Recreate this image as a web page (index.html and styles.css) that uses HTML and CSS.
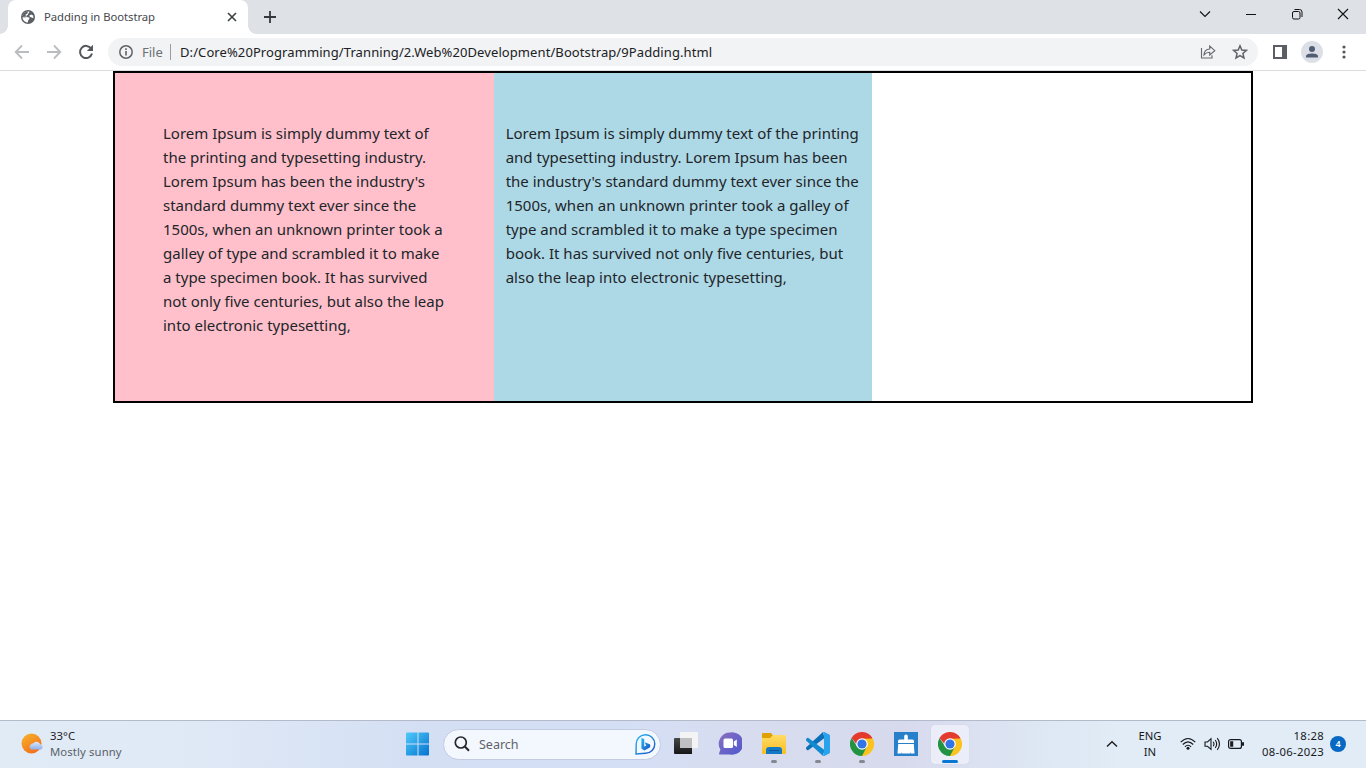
FILE: index.html
```html
<!DOCTYPE html>
<html lang="en">
<head>
<meta charset="utf-8">
<title>Padding in Bootstrap</title>
<link rel="stylesheet" href="styles.css">
</head>
<body>
<svg class="defs" width="0" height="0">
  <defs>
    <linearGradient id="win" x1="0" y1="0" x2="1" y2="1"><stop offset="0" stop-color="#4fcbfa"/><stop offset="1" stop-color="#0572cf"/></linearGradient>
    <linearGradient id="sun" x1="0" y1="0" x2="0.6" y2="1"><stop offset="0" stop-color="#f6b62c"/><stop offset="1" stop-color="#f4701b"/></linearGradient>
    <linearGradient id="cloud" x1="0" y1="0" x2="0" y2="1"><stop offset="0" stop-color="#d9e6fb"/><stop offset="1" stop-color="#8fb0ea"/></linearGradient>
    <linearGradient id="bing" x1="0" y1="0" x2="1" y2="1"><stop offset="0" stop-color="#25b9ec"/><stop offset="1" stop-color="#1a50c8"/></linearGradient>
    <linearGradient id="chat" x1="0" y1="0" x2="1" y2="1"><stop offset="0" stop-color="#8b6fbf"/><stop offset="1" stop-color="#4c58cf"/></linearGradient>
    <linearGradient id="folder" x1="0" y1="0" x2="0" y2="1"><stop offset="0" stop-color="#ffdc66"/><stop offset="1" stop-color="#f8bd21"/></linearGradient>
    <linearGradient id="dark" x1="0" y1="0" x2="0" y2="1"><stop offset="0" stop-color="#474747"/><stop offset="1" stop-color="#161616"/></linearGradient>
    <symbol id="chrome" viewBox="0 0 24 24">
      <path fill="#e33b2e" d="M1.6 6A12 12 0 0 1 22.4 6L12 12Z"/>
      <path fill="#fcc31e" d="M22.4 6A12 12 0 0 1 12 24L12 12 12 6.5Z"/>
      <path fill="#229342" d="M1.6 6A12 12 0 0 0 12 24L16.8 14.8 12 12 7.2 14.8Z"/>
      <path fill="#e33b2e" d="M1.6 6L6.5 12 12 12 12 6.5 22.4 6.5 20 4 5 2.6Z"/>
      <circle cx="12" cy="12" r="5.8" fill="#fff"/><circle cx="12" cy="12" r="4.6" fill="#3174e8"/>
    </symbol>
  </defs>
</svg>
<header class="tabstrip">
  <div class="tab">
    <svg class="globe" width="14" height="14" viewBox="0 0 14 14"><circle cx="7" cy="7" r="7" fill="#5b5f64"/><path fill="#fff" d="M8.2 1.5C8.8 3 7 3 7 4.2S5 5.2 5.2 6.6 8 6.3 8.4 7.8 7 9.5 6.8 12.5C4 12.4 1.7 10.2 1.5 7.2L4.5 7.6 5 6.6 1.6 6C2.1 3.3 4.3 1.3 8.2 1.5ZM10 4.4 12.2 5.5 12.4 8C11 8.4 10.7 7.2 9.2 7.1L8.2 5.7Z"/><path fill="#5b5f64" d="M2 4.5Q3.5 1.8 7 1.3L6.4 3.4 4.6 4.6 4.9 6.4 2 6Z"/></svg>
    <span class="tab-title">Padding in Bootstrap</span>
    <svg width="10" height="10" viewBox="0 0 10 10"><path d="M1 1 9 9M9 1 1 9" stroke="#3c4043" stroke-width="1.6"/></svg>
  </div>
  <svg class="new-tab" width="12" height="12" viewBox="0 0 12 12"><path d="M6 0V12M0 6H12" stroke="#35393d" stroke-width="1.8"/></svg>
  <div class="window-controls">
    <svg width="46" height="28" viewBox="0 0 46 28"><path d="M18 11.5 23 16.5 28 11.5" fill="none" stroke="#111" stroke-width="1.1"/></svg>
    <svg width="46" height="28" viewBox="0 0 46 28"><path d="M18 14.5H28" stroke="#111"/></svg>
    <svg width="46" height="28" viewBox="0 0 46 28"><g fill="none" stroke="#111"><rect x="18.5" y="11.5" width="7.5" height="7.5" rx="1.5"/><path d="M20.5 9.5H25.5Q28 9.5 28 12V17"/></g></svg>
    <svg width="46" height="28" viewBox="0 0 46 28"><path d="M18 9 28 19M28 9 18 19" stroke="#111" stroke-width="1.1"/></svg>
  </div>
</header>
<nav class="toolbar">
  <svg class="back" width="16" height="16" viewBox="0 0 16 16"><path d="M15 8H2M8 1.5 1.7 8 8 14.5" fill="none" stroke="#babcbe" stroke-width="1.8"/></svg>
  <svg class="forward" width="16" height="16" viewBox="0 0 16 16"><path d="M1 8H14M8 1.5 14.3 8 8 14.5" fill="none" stroke="#babcbe" stroke-width="1.8"/></svg>
  <svg class="reload" width="16" height="16" viewBox="0 0 16 16"><path d="M13.2 4.6A6.1 6.1 0 1 0 14 9.6" fill="none" stroke="#54585d" stroke-width="2"/><path d="M15 .8V7H8.8Z" fill="#54585d"/></svg>
  <div class="address">
    <svg width="14" height="14" viewBox="0 0 14 14"><circle cx="7" cy="7" r="6.2" fill="none" stroke="#5f6368" stroke-width="1.5"/><path d="M7 6V10.5M7 3.3V4.9" stroke="#5f6368" stroke-width="1.6"/></svg>
    <span class="scheme">File</span>
    <span class="divider"></span>
    <span class="url">D:/Core%20Programming/Tranning/2.Web%20Development/Bootstrap/9Padding.html</span>
    <svg class="share" width="16" height="16" viewBox="0 0 16 16"><path d="M1.5 4V14H12V11.2M4 10.8C4.2 7.5 6 5.3 9.7 5V2L14.8 6.7 9.7 11V8.2C7 8.2 5.4 9 4 10.8Z" fill="none" stroke="#686c70" stroke-width="1.15"/></svg>
    <svg class="star" width="16" height="16" viewBox="0 0 16 16"><path d="M8 1.8 9.8 6 14.4 6.4 10.9 9.4 12 13.9 8 11.5 4 13.9 5.1 9.4 1.6 6.4 6.2 6Z" fill="none" stroke="#5f6368" stroke-width="1.5"/></svg>
  </div>
  <svg class="panel" width="14" height="14" viewBox="0 0 14 14"><path fill="#5b5f64" fill-rule="evenodd" d="M0 0H14V14H0ZM2 2V12H9V2Z"/></svg>
  <svg class="profile" width="22" height="22" viewBox="0 0 22 22"><circle cx="11" cy="11" r="11" fill="#dce0e6"/><circle cx="11" cy="8" r="3" fill="#505d73"/><path fill="#505d73" d="M5 16.5V15C5 11.5 17 11.5 17 15V16.5Z"/></svg>
  <svg class="dots" width="4" height="14" viewBox="0 0 4 14"><g fill="#54585d"><circle cx="2" cy="2" r="1.6"/><circle cx="2" cy="7" r="1.6"/><circle cx="2" cy="12" r="1.6"/></g></svg>
</nav>
<main class="page">
  <div class="container">
    <div class="col col-pink">
      <p>Lorem Ipsum is simply dummy text of<br>the printing and typesetting industry.<br>Lorem Ipsum has been the industry's<br>standard dummy text ever since the<br>1500s, when an unknown printer took a<br>galley of type and scrambled it to make<br>a type specimen book. It has survived<br>not only five centuries, but also the leap<br>into electronic typesetting,</p>
    </div>
    <div class="col col-blue">
      <p>Lorem Ipsum is simply dummy text of the printing<br>and typesetting industry. Lorem Ipsum has been<br>the industry's standard dummy text ever since the<br>1500s, when an unknown printer took a galley of<br>type and scrambled it to make a type specimen<br>book. It has survived not only five centuries, but<br>also the leap into electronic typesetting,</p>
    </div>
  </div>
</main>
<footer class="taskbar">
  <div class="weather">
    <svg width="23" height="22" viewBox="0 0 23 22"><circle cx="10.5" cy="10.5" r="10" fill="url(#sun)"/><path fill="url(#cloud)" d="M10.5 16.5A3 3 0 0 1 10 11.2Q11 10.2 12 10.6A4.2 4.2 0 0 1 19.3 11.2 2.8 2.8 0 0 1 20 16.5Z"/></svg>
    <div class="weather-text"><span class="temp">33°C</span><span class="sky">Mostly sunny</span></div>
  </div>
  <div class="apps">
    <svg class="start" width="24" height="24" viewBox="0 0 24 24"><path fill="url(#win)" d="M0 1.5Q0 .5 1 .5H11.5V11.5H0ZM12.5 .5H22Q23 .5 23 1.5V11.5H12.5ZM0 12.5H11.5V23.5H1Q0 23.5 0 22.5ZM12.5 12.5H23V22.5Q23 23.5 22 23.5H12.5Z"/></svg>
    <div class="search">
      <svg width="16" height="16" viewBox="0 0 16 16"><circle cx="6.8" cy="6.5" r="5.5" fill="none" stroke="#24272c" stroke-width="1.7"/><path d="M10.8 10.5 15 14.8" stroke="#24272c" stroke-width="2"/></svg>
      <span>Search</span>
      <svg class="bing" width="21" height="21" viewBox="0 0 21 21"><path d="M1 20 1.2 10.5A9.3 9.3 0 1 1 10.5 19.3Z" fill="#f4f9ff" stroke="url(#bing)" stroke-width="1.4"/><path fill="url(#bing)" d="M6.4 4 9.2 5V12.4L11.2 11.8 9.7 8.2 14.8 10.2Q16 12 14.8 13.6L9.4 16.6 6.4 14.6Z"/></svg>
    </div>
    <div class="app"><svg width="24" height="24" viewBox="0 0 24 24"><path fill="url(#dark)" d="M0 7Q0 6 1 6H18V22H1Q0 22 0 21Z"/><path fill="#f4f4f4" d="M6 1Q6 0 7 0H23Q24 0 24 1V15Q24 16 23 16H6Z"/><path fill="#bfc0c2" d="M6 6H18V16H6Z"/></svg></div>
    <div class="app"><svg width="24" height="24" viewBox="0 0 24 24"><path fill="url(#chat)" d="M12 .5A11.2 11.2 0 1 1 12 22.5H2Q.8 22.5 1.2 21L2.4 17.5A11.2 11.2 0 0 1 12 .5Z"/><rect x="5.5" y="6.5" width="9.5" height="9.5" rx="1.5" fill="#fff"/><path fill="#fff" d="M15.8 9.5 18.8 7.5V15L15.8 13Z"/></svg></div>
    <div class="app running"><svg width="24" height="24" viewBox="0 0 24 24"><path fill="#dfa000" d="M0 2Q0 1 1 1H9L11 3.5 9 6H0Z"/><path fill="url(#folder)" d="M0 6H8L11 3H23Q24 3 24 4V21Q24 22 23 22H1Q0 22 0 21Z"/><path fill="#1479c5" d="M4 22V18Q4 15 7 15H17Q20 15 20 18V22Z"/><path d="M7 18.5H17" stroke="#0d559b"/></svg></div>
    <div class="app running"><svg width="24" height="24" viewBox="0 0 24 24"><path fill="#0a70b8" d="M.3 15.2 17 0 18.5 6 2.5 18Q1.6 18.5 1 18L.2 17Q-.2 16 .3 15.2Z"/><path fill="#118ad2" d="M.3 8.8 17 24 18.5 18 2.5 6Q1.6 5.5 1 6L.2 7Q-.2 8 .3 8.8Z"/><path fill="#28a3ec" d="M17 .2Q17.5-.2 18.3.1L23.2 2.4Q24 2.9 24 3.8V20.2Q24 21.1 23.2 21.6L18.3 23.9Q17.5 24.2 17 23.8L18 22V2Z"/></svg></div>
    <div class="app running"><svg width="24" height="24"><use href="#chrome"/></svg></div>
    <div class="app"><svg width="24" height="24" viewBox="0 0 24 24"><rect width="24" height="24" fill="#2880cb"/><path fill="#fff" d="M10.2 7.5V3.8Q12 1.3 13.8 3.8V7.5H18.5Q20 7.5 20 9V11H4V9Q4 7.5 5.5 7.5ZM4.2 12H19.8L20.5 21.5H16.6L16.3 20 16 21.5H8L7.7 20 7.4 21.5H3.5Z"/></svg></div>
    <div class="app active"><svg width="24" height="24"><use href="#chrome"/></svg></div>
  </div>
  <div class="tray">
    <svg class="chevron" width="12" height="8" viewBox="0 0 12 8"><path d="M1 6.5 6 1.7 11 6.5" fill="none" stroke="#202124" stroke-width="1.5"/></svg>
    <div class="lang"><span>ENG</span><span>IN</span></div>
    <svg class="wifi" width="16" height="14" viewBox="0 0 16 14"><g fill="none" stroke="#17191c" stroke-width="1.15"><path d="M.7 5.2Q8-2.2 15.3 5.2M2.8 7.5Q8 2.1 13.2 7.5M4.9 9.8Q8 6.6 11.1 9.8"/></g><circle cx="8" cy="11.3" r="1.5" fill="#17191c"/></svg>
    <svg class="sound" width="17" height="14" viewBox="0 0 17 14"><path d="M1 5H3.5L7 1.7V12.3L3.5 9.3H1ZM9.2 4.8Q10.8 7 9.2 9.2M11.2 3Q14.2 7 11.2 11M13.3 1.2Q17.6 7 13.3 12.8" fill="none" stroke="#17191c" stroke-width="1.1"/></svg>
    <svg class="battery" width="16" height="10" viewBox="0 0 16 10"><rect x=".6" y=".6" width="12.8" height="8.8" rx="2" fill="none" stroke="#17191c" stroke-width="1.2"/><path fill="#17191c" d="M2.2 2.2H5.2V7.8H2.2ZM14 3.2H16V6.8H14Z"/></svg>
    <div class="clock"><span class="time">18:28</span><span class="date">08-06-2023</span></div>
    <span class="count">4</span>
  </div>
</footer>
</body>
</html>
```
FILE: styles.css
```css
* { box-sizing: border-box; }
body {
  margin: 0;
  width: 1366px;
  height: 768px;
  display: flex;
  flex-direction: column;
  overflow: hidden;
  background: #fff;
  font-family: "Noto Sans", "Open Sans", sans-serif;
  color: #212529;
}
svg { display: block; flex: none; }
.defs { position: absolute; }

.tabstrip { display: flex; height: 34px; flex: none; background: #dee1e6; padding-left: 8px; }
.tab {
  position: relative;
  display: flex;
  align-items: center;
  width: 240px;
  height: 34px;
  padding: 0 11px 0 13px;
  background: #fff;
  border-radius: 8px 8px 0 0;
}
.tab::before, .tab::after {
  content: "";
  position: absolute;
  bottom: 0;
  width: 8px;
  height: 8px;
}
.tab::before { left: -8px; background: radial-gradient(circle at 0 0, #dee1e6 7.5px, #fff 8px); }
.tab::after { right: -8px; background: radial-gradient(circle at 100% 0, #dee1e6 7.5px, #fff 8px); }
.tab-title { flex: 1; margin-left: 9px; padding-bottom: 2px; font-size: 11.3px; letter-spacing: -0.05px; color: #45484c; white-space: nowrap; }
.new-tab { margin: 11px 0 0 16px; }
.window-controls { display: flex; margin-left: auto; }

.toolbar { display: flex; align-items: center; height: 37px; flex: none; border-bottom: 1px solid #dadce0; padding-left: 14px; }
.forward { margin-left: 16px; }
.reload { margin-left: 16px; }
.address {
  display: flex;
  align-items: center;
  width: 1150px;
  height: 28px;
  margin-left: 14px;
  padding: 0 10px 0 11px;
  border-radius: 14px;
  background: #f1f3f4;
  font-size: 13px;
  white-space: nowrap;
}
.scheme { width: 21px; margin-left: 9px; color: #6c7075; letter-spacing: 0; }
.divider { width: 1px; height: 16px; margin: 0 9px 0 7px; background: #9a9da1; }
.url { color: #202124; letter-spacing: 0.09px; }
.share { margin-left: auto; }
.star { margin-left: 16px; }
.panel { margin-left: 15px; }
.profile { margin-left: 14px; }
.dots { margin-left: 19px; }

.page { flex: 1; }
.container { display: flex; width: 1140px; height: 332px; margin: 0 auto; border: 2px solid #000; }
.col { width: 33.3333%; font-size: 15px; line-height: 24px; white-space: nowrap; }
.col p { margin: 0; }
.col-pink { padding: 48px; background: #ffc0cb; }
.col-blue { padding: 48px 12px; background: #add8e6; }

.taskbar {
  display: flex;
  height: 48px;
  flex: none;
  border-top: 1px solid #b3bac9;
  background: linear-gradient(90deg, #e0ebf6 0, #e0eaf6 170px, #d4dff4 420px, #d4dff5 620px, #d8dcef 760px, #d7daed 900px, #dde5f3 1020px, #e1ecf6 1120px, #e1ecf6 100%);
}
.weather { display: flex; width: 406px; padding: 12px 0 0 21px; }
.weather-text { display: flex; flex-direction: column; margin: -5px 0 0 6px; font-size: 11.3px; line-height: 16px; }
.temp { color: #1d2025; letter-spacing: 0.1px; }
.sky { color: #5b6067; letter-spacing: 0.12px; }
.apps { display: flex; align-items: center; height: 46px; }
.start { margin-right: 13px; }
.search {
  display: flex;
  align-items: center;
  width: 218px;
  height: 31px;
  margin-right: 3px;
  padding: 0 4px 0 10px;
  border: 1px solid #c4cbe0;
  border-radius: 16px;
  background: #f3f7fe;
  color: #5e6268;
  font-size: 12.5px;
}
.search span { margin-left: 9px; }
.bing { margin-left: auto; }
.app { position: relative; display: flex; align-items: center; justify-content: center; width: 44px; height: 46px; }
.running::after, .active::after { content: ""; position: absolute; bottom: 4px; width: 6px; height: 3px; border-radius: 2px; background: #858891; }
.active::before { content: ""; position: absolute; inset: 4px 3px 3px 3px; border-radius: 4px; background: #ebeef8; box-shadow: 0 0 1px #bac1d2; }
.active svg { position: relative; }
.active::after { width: 16px; background: #0878d4; }
.tray { display: flex; align-items: center; height: 46px; margin-left: auto; padding-right: 20px; font-size: 11.3px; line-height: 16px; color: #17191c; }
.lang { display: flex; flex-direction: column; align-items: center; width: 26px; margin: 0 17px 0 19px; }
.sound { margin-left: 8px; }
.battery { margin-left: 7px; }
.clock { display: flex; flex-direction: column; align-items: flex-end; width: 64px; margin: 0 6px 0 16px; white-space: nowrap; letter-spacing: 0.3px; }
.count { display: flex; align-items: center; justify-content: center; width: 16px; height: 16px; border-radius: 50%; background: #0868c4; color: #fff; font-size: 9px; font-weight: 600; }
```
